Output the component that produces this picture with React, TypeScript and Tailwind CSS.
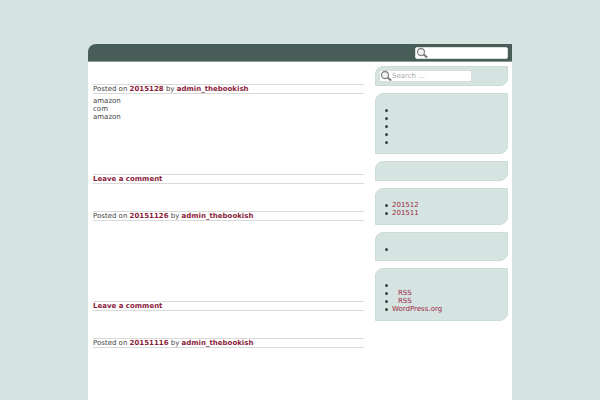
import React from 'react';

interface Post {
  date: string;
  lines: string[];
  commentsOpen: boolean;
}

const posts: Post[] = [
  { date: '2015128', lines: ['amazon', 'com', 'amazon'], commentsOpen: true },
  { date: '20151126', lines: [], commentsOpen: true },
  { date: '20151116', lines: [], commentsOpen: false },
];

const SearchIcon = () => (
  <svg viewBox="0 0 12 12" className="pointer-events-none absolute top-0 left-px size-3" fill="none" aria-hidden="true">
    <path d="M7.6 7.4 10.6 9.9" stroke="#777" strokeWidth="2" strokeLinecap="round" />
    <circle cx="5" cy="5" r="3.5" fill="#f1f4f5" stroke="#858585" strokeWidth="1.3" />
  </svg>
);

const SearchBox = ({ label, placeholder }: { label: string; placeholder?: string }) => (
  <form role="search" className="relative w-[93px]">
    <input
      type="search"
      aria-label={label}
      placeholder={placeholder}
      className="block h-3 w-full rounded-xs border border-[#d8dedc] bg-white pr-1 pl-3 text-[7px] leading-[10px] text-[#444] outline-none placeholder:text-[#aaa]"
    />
    <SearchIcon />
  </form>
);

const Widget = ({ children }: { children?: React.ReactNode }) => (
  <section className="min-h-5 rounded-tl-lg rounded-br-lg border border-[#cbdcd7] bg-[#d5e4e0]">
    {children}
  </section>
);

const WidgetList = ({ children }: { children: React.ReactNode }) => (
  <ul className="pt-3 pb-[7px] pl-[9px]">{children}</ul>
);

const WidgetItem = ({ children }: { children?: React.ReactNode }) => (
  <li className="flex h-2 items-center gap-1 before:size-[3px] before:rounded-full before:bg-[#2f4a44]">
    {children}
  </li>
);

const App = () => {
  return (
    <div className="flex min-h-screen flex-col bg-[#d5e4e0] px-22 pt-11 font-['DejaVu_Sans',sans-serif] text-[7px] leading-[8px] text-[#444]">
      <header className="flex h-[18px] items-center justify-end rounded-tl-lg border-b border-[#8b9c98] bg-[#485c58] pr-1">
        <SearchBox label="Search the site" />
      </header>

      <div className="flex flex-1 gap-[11px] bg-white pr-1 pl-[5px]">
        <main className="flex min-w-0 flex-1 flex-col gap-[27px] pt-[22px]">
          {posts.map((post) => (
            <article key={post.date}>
              <div className="border-y border-[#d9d9d9]">
                Posted on <a href="#" className="font-bold text-[#8c1d3a]">{post.date}</a> by{' '}
                <a href="#" className="font-bold text-[#8c1d3a]">admin_thebookish</a>
              </div>
              {post.commentsOpen && (
                <>
                  <div className="min-h-20 pt-[3px]">
                    {post.lines.map((line, i) => (
                      <p key={i}>{line}</p>
                    ))}
                  </div>
                  <footer className="border-y border-[#d9d9d9]">
                    <a href="#" className="font-bold text-[#8c1d3a]">Leave a comment</a>
                  </footer>
                </>
              )}
            </article>
          ))}
        </main>

        <aside className="flex w-[133px] shrink-0 flex-col gap-[7px] pt-1 text-[#9c2846]">
          <Widget>
            <div className="p-[3px]">
              <SearchBox label="Search" placeholder="Search ..." />
            </div>
          </Widget>
          <Widget>
            <WidgetList>
              <WidgetItem />
              <WidgetItem />
              <WidgetItem />
              <WidgetItem />
              <WidgetItem />
            </WidgetList>
          </Widget>
          <Widget />
          <Widget>
            <WidgetList>
              <WidgetItem><a href="#">201512</a></WidgetItem>
              <WidgetItem><a href="#">201511</a></WidgetItem>
            </WidgetList>
          </Widget>
          <Widget>
            <WidgetList>
              <WidgetItem />
            </WidgetList>
          </Widget>
          <Widget>
            <WidgetList>
              <WidgetItem />
              <WidgetItem><a href="#" className="pl-1.5">RSS</a></WidgetItem>
              <WidgetItem><a href="#" className="pl-1.5">RSS</a></WidgetItem>
              <WidgetItem><a href="#">WordPress.org</a></WidgetItem>
            </WidgetList>
          </Widget>
        </aside>
      </div>
    </div>
  );
};

export default App;
